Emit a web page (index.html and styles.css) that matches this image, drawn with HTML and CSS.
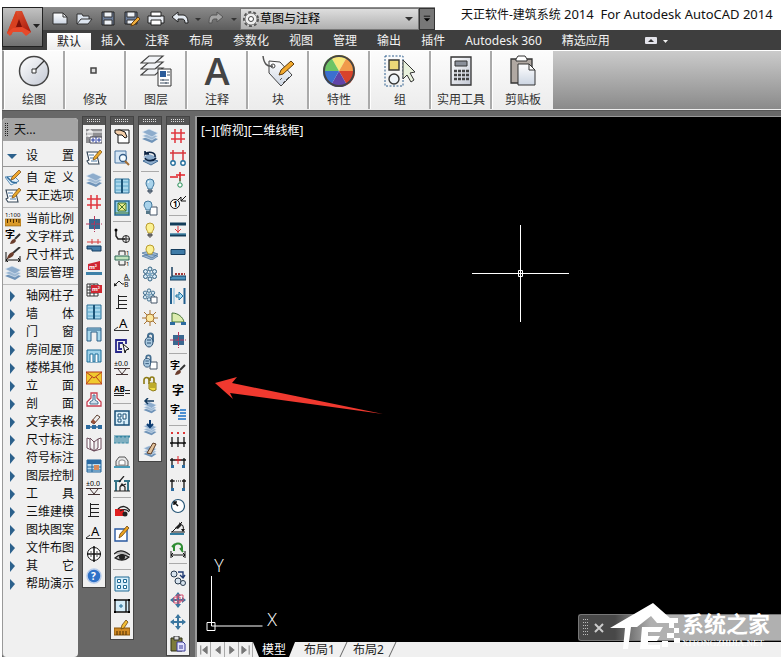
FILE: index.html
```html
<!DOCTYPE html>
<html lang="zh-CN">
<head>
    <meta charset="UTF-8">
    <meta name="viewport" content="width=device-width, initial-scale=1.0">
    <title>天正软件-建筑系统 2014</title>
    <link rel="stylesheet" href="styles.css">
</head>
<body>
    <svg class="gradients" aria-hidden="true">
        <defs>
            <linearGradient id="g-red" x1="0" y1="0" x2="1" y2="1"><stop offset="0" stop-color="#f0603a"/><stop offset="1" stop-color="#a01408"/></linearGradient>
            <linearGradient id="g-lens" x1="0" y1="0" x2="1" y2="1"><stop offset="0" stop-color="#fff"/><stop offset="1" stop-color="#c3c8d4"/></linearGradient>
            <linearGradient id="g-page" x1="0" y1="0" x2="0" y2="1"><stop offset="0" stop-color="#fff"/><stop offset="1" stop-color="#ccd5e2"/></linearGradient>
        </defs>
    </svg>

    <!-- Iconos -->
    <svg class="sprite" aria-hidden="true">
        <symbol id="layers" viewBox="0 0 16 16"><path d="M0 11l7-3 9 3-6 4z" fill="#6f93b8"/><path d="M0 8l7-3 9 3-6 4z" fill="#9db8d3" stroke="#e8f0f8" stroke-width=".6"/><path d="M0 4l7-3 9 4-6 4z" fill="#8daccc" stroke="#e8f0f8" stroke-width=".6"/></symbol>
        <symbol id="paper-pen" viewBox="0 0 16 16"><path d="M1 2h11v2l-1 1 2 9H3L1 11l2-1z" fill="#fff" stroke="#345" stroke-width="1.1"/><path d="M3 5h5M4 8h4M5 11h6" stroke="#4a7ba5" stroke-width="1.2"/><path d="M7 10l1-3 6-7 2 2-6 7z" fill="#e8a92c" stroke="#7a4a10" stroke-width=".7"/></symbol>
        <symbol id="pen-sheet" viewBox="0 0 16 16"><path d="M0 7l9-1 5 5-8 4z" fill="#e4f1fb" stroke="#5b8db5"/><path d="M2 7l5 5 5 1" fill="none" stroke="#2f6d9e" stroke-width="1.6"/><path d="M6 10l1-3 7-7 2 2-7 7z" fill="#efa62d" stroke="#70430e" stroke-width=".7"/></symbol>
        <symbol id="ruler" viewBox="0 0 16 16"><text x="0" y="6" class="t6">1:100</text><path d="M0 8h16v7H0z" fill="#d99a2b" stroke="#8c5a0c" stroke-width=".6"/><path d="M2.500 8v4M5.500 8v3M8.500 8v4M11.500 8v3M14 8v4" stroke="#4d2c00"/></symbol>
        <symbol id="zi-brush" viewBox="0 0 16 16"><text x="0" y="9" class="t10">字</text><path d="M15 5l-5 5" stroke="#333" stroke-width="2"/><path d="M5 15c1-4 3-5 5-5l1 2c-1 2-3 3-6 3z" fill="#6b3d2c"/></symbol>
        <symbol id="dim-brush" viewBox="0 0 16 16"><path d="M1 5v10M15 9v6M1 13h14M3 11l-2 2 2 2M13 11l2 2-2 2" fill="none" stroke="#111"/><path d="M15 0L8 6" stroke="#333" stroke-width="2"/><path d="M2 12c1-5 3-6 6-7l1 2c-1 3-4 4-7 5z" fill="#6b3d2c"/></symbol>
        <symbol id="hash" viewBox="0 0 16 16"><path d="M5 1v14M11 1v14M1 5h14M1 11h14" stroke="#e0343c" stroke-width="1.500"/></symbol>
        <symbol id="frame-add" viewBox="0 0 16 16"><path d="M0 1h16v14H0z" fill="#8f8f92"/><path d="M0 4h16M0 8h5M4 1v10M2 3h4v5H2z" stroke="#fff" fill="none"/><path d="M4 9h12v6H4z" fill="#fff" stroke="#445"/><path d="M10 9v6M5 12h4M7 10v4M11 12h4M13 10v4" stroke="#2b3fa0"/></symbol>
        <symbol id="column" viewBox="0 0 16 16"><path d="M3 3h11v10H3z" fill="#3a6890"/><path d="M8.500 0v16M0 8h16" stroke="#b4365c" stroke-dasharray="4 1"/></symbol>
        <symbol id="wall-cross" viewBox="0 0 16 16"><path d="M1 4h14M6 1v5M12 1v5" stroke="#d83b3b"/><path d="M1 8h14v5H6v-2H1z" fill="#467da9" stroke="#153e63"/></symbol>
        <symbol id="m2-bar" viewBox="0 0 16 16"><path d="M2 4l12-3v9H2z" fill="#cf2731"/><text x="3" y="9" class="t6 white">m²</text><path d="M0 12h16v3H0z" fill="#3e81a8"/></symbol>
        <symbol id="m2-table" viewBox="0 0 16 16"><path d="M1 2h11v12H1zM1 5h11M1 8h11M1 11h11M4 2v12M8 2v12" fill="#fff" stroke="#333"/><path d="M5 3h11v8H5z" fill="#cf2731"/><text x="6" y="9" class="t6 white">m²</text></symbol>
        <symbol id="window" viewBox="0 0 16 16"><path d="M1 1h14v14H1z" fill="#a9d8ed" stroke="#2a6f96"/><path d="M1 4h14M1 8h14M1 12h14" stroke="#5ba4c8"/><path d="M8 1v14" stroke="#1c5478" stroke-width="2"/></symbol>
        <symbol id="arch" viewBox="0 0 16 16"><path d="M1 15V2h14v13h-4V6H5v9z" fill="#a9d8ed" stroke="#2a5f86"/><path d="M1 4h14" stroke="#2a5f86"/></symbol>
        <symbol id="door-win" viewBox="0 0 16 16"><path d="M1 2h14v12H1z" fill="#9ed2ea" stroke="#1d6c98"/><path d="M4 14V6h3v8M9 14V6h3v8" fill="#fff" stroke="#1d6c98"/></symbol>
        <symbol id="envelope" viewBox="0 0 16 16"><path d="M0 2h16v12H0z" fill="#f0c92e" stroke="#b63a22"/><path d="M0 2l8 6 8-6M0 14l6-7M16 14l-6-7" stroke="#b63a22" fill="none"/></symbol>
        <symbol id="house-plan" viewBox="0 0 16 16"><path d="M5 6V1h6v5l4 4v4H1v-4z" fill="#fff" stroke="#c73e50" stroke-width="1.300"/><path d="M7 3v5l-3 2v2h8v-2L9 8V3z" fill="#cfe0ed" stroke="#456f91"/></symbol>
        <symbol id="eraser" viewBox="0 0 16 16"><path d="M2 13h12" stroke="#2c6b9f" stroke-width="1.500"/><path d="M0 11h4v4H0zM6 11h4v4H6zM12 11h4v4h-4z" fill="#2c6b9f"/><path d="M5 8l6-7 3 2-6 7z" fill="#eee" stroke="#5e4030"/><path d="M5 8l2-3 3 3-2 2z" fill="#9a513a"/></symbol>
        <symbol id="book" viewBox="0 0 16 16"><path d="M1 2l3 1v9l4 3 4-3V3l3-1v11l-7 2-7-3zM8 15V6L4 2M8 6l4-3" fill="#fff" stroke="#6b4b5a"/></symbol>
        <symbol id="table-hand" viewBox="0 0 16 16"><path d="M1 2h14v12H1z" fill="#b9dcf2" stroke="#23659a"/><path d="M1 2h14v4H1z" fill="#2a6ca5"/><path d="M1 9h14M1 12h14M6 6v8" stroke="#23659a"/><path d="M8 7h5v5H8z" fill="#d78a5c"/></symbol>
        <symbol id="elev" viewBox="0 0 16 16"><text x="0" y="6" class="t7">±0.0</text><path d="M0 8.500h16M4 9l4 5 4-5M2 14.500h12" stroke="#433" fill="none"/></symbol>
        <symbol id="comb" viewBox="0 0 16 16"><path d="M4.500 1v14M4 2.500h9M4 6.500h9M4 10.500h9M2 14.500h11" stroke="#222"/></symbol>
        <symbol id="a-arrow" viewBox="0 0 16 16"><text x="5" y="12" class="t13">A</text><path d="M0 14.500h15M4 11l-4 3" stroke="#333" fill="none"/></symbol>
        <symbol id="compass" viewBox="0 0 16 16"><circle cx="8" cy="8" r="6.500" fill="#fff" stroke="#111"/><path d="M8 0v16M1 8h14" stroke="#111" stroke-width="1.500"/><path d="M5 5v6M11 5v6" stroke="#555"/></symbol>
        <symbol id="help" viewBox="0 0 16 16"><circle cx="8" cy="8" r="7" fill="#2f72c8" stroke="#b6cbea" stroke-width="1.500"/><text x="5" y="12" class="t10 white">?</text></symbol>
        <symbol id="hand-page" viewBox="0 0 16 16"><path d="M4 2h11v13H4z" fill="#fff" stroke="#111"/><path d="M1 2h5l5 2 2 5-2 1-3-3H4L1 5z" fill="#f2cda8" stroke="#111"/></symbol>
        <symbol id="page-zoom" viewBox="0 0 16 16"><path d="M1 1h11v12H1z" fill="#d6e6f4" stroke="#4a76a3"/><circle cx="9" cy="8" r="3.500" fill="#f4fbff" stroke="#335c86" stroke-width="1.300"/><path d="M11 11l4 4" stroke="#a06b32" stroke-width="2"/></symbol>
        <symbol id="win-x" viewBox="0 0 16 16"><path d="M1 1h14v14H1z" fill="#8dcbe5" stroke="#26678e" stroke-width="1.500"/><path d="M4 3h8v8H4z" fill="#e7ea8c" stroke="#47762c"/><path d="M4 3l8 8M12 3l-8 8M1 13h14" stroke="#47762c"/></symbol>
        <symbol id="pipe" viewBox="0 0 16 16"><path d="M2 1v7l2 3h7" stroke="#222" fill="none" stroke-width="1.500"/><circle cx="2" cy="2" r="1.500"/><circle cx="12" cy="11" r="3.500" fill="none" stroke="#222"/><path d="M12 8v7M9 11h7" stroke="#222"/></symbol>
        <symbol id="section" viewBox="0 0 16 16"><path d="M5 5V1h6M5 11v4h6M11 1v4M11 11v4" stroke="#222" fill="none"/><path d="M1 6h14v4H1z" fill="#bfe3bd" stroke="#2c6957"/><text x="12" y="5" class="t6">1</text><text x="12" y="16" class="t6">1</text></symbol>
        <symbol id="ab-lead" viewBox="0 0 16 16"><path d="M0 14l5-5 3 3h2M0 14l1-3M0 14l3-1M10 8h6" stroke="#222" fill="none"/><text x="10" y="7" class="t7">A</text><text x="10" y="15" class="t7">B</text></symbol>
        <symbol id="door-cursor" viewBox="0 0 16 16"><path d="M12 6V2H2v12h6M9 5H5v6h3" fill="none" stroke="#28288b" stroke-width="1.800"/><path d="M9 6l6 5-3 1-1 3z" fill="#fff" stroke="#111"/></symbol>
        <symbol id="ab-num" viewBox="0 0 16 16"><text x="0" y="10" class="t8">AB</text><path d="M0 11.500h10M0 13.500h10M11 8.500h5M11 11.500h5" stroke="#222"/></symbol>
        <symbol id="panel" viewBox="0 0 16 16"><path d="M1 1h14v14H1z" fill="#d7edf8" stroke="#174e76" stroke-width="1.500"/><path d="M4 4h3v3H4zM9 4h3v5H9zM4 9h3v3H4zM10 11v4" fill="#fff" stroke="#174e76"/></symbol>
        <symbol id="coil" viewBox="0 0 16 16"><path d="M0 4h16M0 5v6h2V5h2v6h2V5h2v6h2V5h2v6h2V5h2" fill="none" stroke="#3485a2" stroke-width="1.200"/></symbol>
        <symbol id="dome" viewBox="0 0 16 16"><path d="M2 12V7l3-4h6l3 4v5z" fill="#e8e8e8" stroke="#555"/><path d="M5 11V7l2-1h2l2 1v4z" fill="#fff" stroke="#888"/><path d="M0 12h16v2H0z" fill="#4a9bb7"/></symbol>
        <symbol id="roof-person" viewBox="0 0 16 16"><path d="M0 5h7M10 5h6M2 5v10M14 5v10" stroke="#347387" stroke-width="2"/><path d="M5 6l5-6M6 15v-4l2-3 3 3v4zM7 10l5-2M0 15h16" fill="none" stroke="#222" stroke-width="1.200"/></symbol>
        <symbol id="red-eye" viewBox="0 0 16 16"><path d="M1 5h9v7H1z" fill="#e02020"/><path d="M4 5c4-4 9-3 12 2M6 7c3-2 7-2 9 1" fill="none" stroke="#222" stroke-width="1.300"/><circle cx="11" cy="10" r="2.500" fill="#222"/></symbol>
        <symbol id="note-pen" viewBox="0 0 16 16"><path d="M1 3h12v12H1z" fill="#fff" stroke="#2858a0" stroke-width="1.400"/><path d="M5 12l1-4 7-8 2 2-7 8z" fill="#eca21e" stroke="#6b4411" stroke-width=".8"/></symbol>
        <symbol id="eye" viewBox="0 0 16 16"><path d="M0 6c5-5 10-4 16 1M1 10c4-4 9-4 14-1-4 4-9 4-14 1z" fill="#bbb" stroke="#222" stroke-width="1.200"/><circle cx="8" cy="9" r="3" fill="#222"/></symbol>
        <symbol id="grid4" viewBox="0 0 16 16"><path d="M1 1h14v14H1z" fill="#d5eefb" stroke="#206a94"/><path d="M3.500 3.500h3v3h-3zM9.500 3.500h3v3h-3zM3.500 9.500h3v3h-3zM9.500 9.500h3v3h-3z" fill="#fff" stroke="#206a94"/></symbol>
        <symbol id="sheet-dot" viewBox="0 0 16 16"><path d="M1 2h14v12H1zM12 2v12" fill="#d5eefb" stroke="#111" stroke-width="1.300"/><path d="M7 6v4M5 8h4" stroke="#206a94"/><path d="M0 1h2v2H0zM0 13h2v2H0zM14 1h2v2h-2zM14 13h2v2h-2z"/></symbol>
        <symbol id="ruler-pen" viewBox="0 0 16 16"><path d="M0 8h16v7H0z" fill="#d18b25" stroke="#86540c"/><path d="M3 11v4M6 11v4M9 11v4M12 11v4" stroke="#4d2c00"/><path d="M7 9l1-4 4-5 2 2-4 6z" fill="#f2bd35" stroke="#6b4411" stroke-width=".8"/></symbol>
        <symbol id="layer-back" viewBox="0 0 16 16"><path d="M1 11l6-3 9 3-7 4z" fill="#8daccc" stroke="#436d96"/><path d="M1 7l6-3 8 3-6 3z" fill="#8daccc"/><path d="M13 7c1-5-7-6-10-3V1M3 4h4M3 8c2 4 9 3 11 0" stroke="#0a2140" stroke-width="1.600" fill="none"/></symbol>
        <symbol id="bulb" viewBox="0 0 16 16"><path d="M6 11c0-2-2-3-2-6a4 4 0 018 0c0 3-2 4-2 6z" fill="#a8d2ea" stroke="#3f769b"/><path d="M6 12h4v2H6zM7 15h2" fill="#789" stroke="#456"/><path d="M6 5l1-2" stroke="#fff"/></symbol>
        <symbol id="bulb-page" viewBox="0 0 16 16"><path d="M8 7h7v8H8z" fill="#fff" stroke="#456"/><path d="M4 10c0-2-2-3-2-5a4 4 0 018 0c0 2-2 3-2 5z" fill="#a8d2ea" stroke="#3f769b"/><path d="M4 11h4v3H4z" fill="#578"/></symbol>
        <symbol id="bulb-on" viewBox="0 0 16 16"><path d="M6 11c0-2-2-3-2-6a4 4 0 018 0c0 3-2 4-2 6z" fill="#fbf191" stroke="#b99b2d"/><path d="M6 12h4v2H6zM7 15h2" fill="#777" stroke="#555"/></symbol>
        <symbol id="bulb-layers" viewBox="0 0 16 16"><path d="M0 9l7-2 9 3-6 4zM0 12l7-2 9 2-6 4z" fill="#9db8d3" stroke="#456f98" stroke-width=".7"/><path d="M6 10c0-2-2-2-2-5a4 4 0 018 0c0 3-2 3-2 5z" fill="#fbf191" stroke="#b99b2d"/></symbol>
        <symbol id="snow" viewBox="0 0 16 16"><g fill="#d6e9f5" stroke="#2f5f80"><circle cx="8" cy="3" r="2"/><circle cx="8" cy="13" r="2"/><circle cx="3.500" cy="5.500" r="2"/><circle cx="12.500" cy="5.500" r="2"/><circle cx="3.500" cy="10.500" r="2"/><circle cx="12.500" cy="10.500" r="2"/></g><path d="M8 5v6M5 7l6 3M11 7l-6 3" stroke="#7ba6c2" stroke-width="1.500"/></symbol>
        <symbol id="snow-page" viewBox="0 0 16 16"><use href="#snow" width="14" height="14"/><path d="M9 9h6v6H9z" fill="#fff" stroke="#456"/></symbol>
        <symbol id="sun" viewBox="0 0 16 16"><path d="M8 0v16M0 8h16M2 2l12 12M14 2L2 14" stroke="#a87432"/><circle cx="8" cy="8" r="4" fill="#fbe69c" stroke="#a87432"/></symbol>
        <symbol id="lock" viewBox="0 0 16 16"><path d="M6 7V4a2.500 2.500 0 015 0v5l-2 2" fill="none" stroke="#456f91" stroke-width="2"/><ellipse cx="7" cy="10" rx="4" ry="5" fill="#aac9df" stroke="#294f73"/><path d="M5 8h4M5 11h4" stroke="#294f73"/></symbol>
        <symbol id="lock-page" viewBox="0 0 16 16"><path d="M8 8h7v7H8z" fill="#fff" stroke="#456"/><use href="#lock" x="-1" y="0" width="14" height="14"/></symbol>
        <symbol id="unlock" viewBox="0 0 16 16"><path d="M2 8V4a2.500 2.500 0 015 0v4M8 5V3a2 2 0 014 0v4" fill="none" stroke="#8d7a13" stroke-width="1.600"/><path d="M7 7h7v7l-3 1-4-2z" fill="#efdc45" stroke="#8d7a13"/><path d="M8 9h5M8 11h5" stroke="#8d7a13"/></symbol>
        <symbol id="layer-left" viewBox="0 0 16 16"><use href="#layers" y="3" width="16" height="13"/><path d="M12 3H3M6 0L3 3l3 3" stroke="#12395d" fill="none" stroke-width="1.500"/></symbol>
        <symbol id="layer-down" viewBox="0 0 16 16"><use href="#layers" y="3" width="16" height="13"/><path d="M8 0v7M5 4l3 3 3-3" stroke="#0c3b70" fill="none" stroke-width="2"/></symbol>
        <symbol id="layer-brush" viewBox="0 0 16 16"><use href="#layers" y="3" width="16" height="13"/><path d="M5 11l6-10 3 1-5 10z" fill="#e2c19a" stroke="#5a3a24"/></symbol>
        <symbol id="axis-two" viewBox="0 0 16 16"><path d="M0 3h16M3 0v10M13 0v10" stroke="#d6333a" stroke-width="1.500"/><circle cx="3" cy="13" r="2.200" fill="#fff" stroke="#216d9b" stroke-width="1.400"/><circle cx="13" cy="13" r="2.200" fill="#fff" stroke="#216d9b" stroke-width="1.400"/></symbol>
        <symbol id="axis-one" viewBox="0 0 16 16"><path d="M0 5h8M10 0v9M6 3h9" stroke="#e02027" stroke-width="1.600"/><path d="M10 6v4" stroke="#1d8b50"/><circle cx="10" cy="13" r="2.200" fill="#fff" stroke="#1d8b50"/></symbol>
        <symbol id="axis-num" viewBox="0 0 16 16"><circle cx="5" cy="10" r="4.500" fill="#fff" stroke="#111"/><text x="3" y="13" class="t8">1</text><path d="M8 6l3-3v4l5-5M11 7h5" stroke="#111" fill="none"/></symbol>
        <symbol id="wall-mid" viewBox="0 0 16 16"><path d="M0 2h16M0 13h16" stroke="#123c59" stroke-width="3"/><path d="M0 12h16" stroke="#56a5c9"/><path d="M8 4v7M5 7l3 3 3-3" stroke="#d6333a" fill="none"/></symbol>
        <symbol id="wall" viewBox="0 0 16 16"><path d="M1 5.500h14v5H1z" fill="#3f7ba7" stroke="#153c5c"/></symbol>
        <symbol id="wall-l" viewBox="0 0 16 16"><path d="M2 1v9h14v4H0v-3h2z" fill="#4a91bc" stroke="#153c5c"/><path d="M5 8h10" stroke="#a33838" stroke-width="2" stroke-dasharray="2 1"/></symbol>
        <symbol id="wall-shift" viewBox="0 0 16 16"><path d="M1 0v16M14.500 0v16" stroke="#225f8d" stroke-width="2"/><path d="M4 0v16" stroke="#76b4d8"/><path d="M6 7h3V4l4 4-4 4V9H6z" fill="#a8dbf3" stroke="#1c719e"/></symbol>
        <symbol id="slope" viewBox="0 0 16 16"><path d="M2 3c6 0 11 4 12 9H2z" fill="#dcecae" stroke="#447234"/><path d="M0 12h5v3H0zM11 12h5v3h-5z" fill="#2c6b9f"/></symbol>
        <symbol id="zi" viewBox="0 0 16 16"><text x="2" y="13" class="t12">字</text></symbol>
        <symbol id="zi-page" viewBox="0 0 16 16"><text x="0" y="9" class="t10">字</text><path d="M10 6h6M10 9h6M8 12h8M8 15h8" stroke="#4d8fd0" stroke-width="2"/></symbol>
        <symbol id="dim3" viewBox="0 0 16 16"><path d="M2 5v10M8 5v10M14 5v10M0 11h16M1 12l2-2M7 12l2-2M13 12l2-2" stroke="#111" stroke-width="1.300"/><path d="M1 1h2M7 1h2M13 1h2" stroke="#d33" stroke-width="2"/></symbol>
        <symbol id="dim-red" viewBox="0 0 16 16"><path d="M2 4v9M14 4v9M0 6h16" stroke="#111" stroke-width="1.300"/><path d="M5 6h6M8 2v8" stroke="#e02027"/><path d="M1 11h3v3H1zM12 11h3v3h-3z" fill="#2c6b9f"/></symbol>
        <symbol id="dim-gap" viewBox="0 0 16 16"><path d="M2 3v10M14 3v10M0 5h4M12 5h4" stroke="#111" stroke-width="1.300"/><path d="M4 5h8" stroke="#111" stroke-dasharray="1 1"/><path d="M1 12h3v3H1zM12 12h3v3h-3z" fill="#2c6b9f"/></symbol>
        <symbol id="radius" viewBox="0 0 16 16"><circle cx="8" cy="8" r="6.500" fill="#fff" stroke="#245475" stroke-width="1.200"/><path d="M8 8L4 4M4 7V4h3" stroke="#111" fill="none" stroke-width="1.500"/></symbol>
        <symbol id="angle" viewBox="0 0 16 16"><path d="M1 12h14M2 12L12 2M9 3c4 1 5 4 4 8" stroke="#111" fill="none"/><path d="M5 8l5-5 2 2-4 4z" fill="#222"/><path d="M11 9h4l-2 3z" fill="#111"/><path d="M0 14h14" stroke="#347c9e" stroke-width="2"/></symbol>
        <symbol id="dim-turn" viewBox="0 0 16 16"><path d="M4 9V5a4 3.500 0 018 0v3M2 5l3-3M10 6l3 4" fill="none" stroke="#2e8c32" stroke-width="2"/><path d="M1 9v7M15 9v7M1 13h14M3 11l-2 2 2 2M13 11l2 2-2 2" fill="none" stroke="#111"/></symbol>
        <symbol id="copy-round" viewBox="0 0 16 16"><g fill="#d7e3ee" stroke="#28394c"><circle cx="4" cy="4" r="3"/><circle cx="8" cy="11" r="3"/><circle cx="13" cy="13" r="2.500"/></g><path d="M8 2h5v5M10 5l3 3 2-3" fill="none" stroke="#203b74" stroke-width="1.400"/></symbol>
        <symbol id="move" viewBox="0 0 16 16"><path d="M8 1v14M1 8h14" stroke="#3b769f" stroke-width="2"/><path d="M8 0l3 4H5zM8 16l3-4H5zM0 8l4-3v6zM16 8l-4-3v6z" fill="#3b769f"/></symbol>
        <symbol id="move-red" viewBox="0 0 16 16"><use href="#move" width="16" height="16"/><path d="M4 5h6v6H4zM7 3h6v6H7z" fill="none" stroke="#d94a6c"/></symbol>
        <symbol id="clip" viewBox="0 0 16 16"><path d="M1 2h11v13H1z" fill="#7c7b3a" stroke="#2f3018"/><path d="M4 0h5v4H4z" fill="#ddd" stroke="#333"/><path d="M7 6h6l2 2v7H7z" fill="#e3e3ff" stroke="#3b3b98"/><path d="M9 10h4M9 12h4" stroke="#3b3b98"/></symbol>
        <symbol id="tri" viewBox="0 0 16 16"><path d="M5 3l5 5-5 6z" fill="#2c618c"/></symbol>
    </svg>

    <header class="top">
        <div class="app-cell">
            <button class="app-button" aria-label="应用程序菜单">
                <svg width="38" height="36" viewBox="0 0 38 36"><path d="M13 2h6l9 21-5 3-2-5H10l-2 5-4-2z" fill="url(#g-red)"/><path d="M13 2l3 12-6 7-2 5-4-2z" fill="#d8401f"/><path d="M16 10l3 8h-6z" fill="#7c1109"/><path d="M4 24l6-5 9-1 9 5-5 4-4-4h-9l-3 4z" fill="#e8492a"/><path d="M30 15h7l-3.500 4z" fill="#222"/></svg>
            </button>
        </div>
        <div class="quick">
            <button aria-label="新建"><svg viewBox="0 0 18 18"><path d="M2 3h10l4 4v7H2z" fill="url(#g-page)" stroke="#333"/><path d="M12 3v4h4" fill="none" stroke="#333"/></svg></button>
            <button aria-label="打开"><svg viewBox="0 0 18 18"><path d="M2 14V4h5l1 2h6v3M2 14l4-5h11l-4 5z" fill="#dde5ef" stroke="#333"/></svg></button>
            <button aria-label="保存"><svg viewBox="0 0 18 18"><path d="M3 2h12v13H3z" fill="#6c7d98" stroke="#222"/><path d="M5 2h8v5H5zM5 10h8v5H5z" fill="#eef2f7" stroke="#333"/></svg></button>
            <button aria-label="另存为"><svg viewBox="0 0 18 18"><path d="M2 2h12v12H2z" fill="#6c7d98" stroke="#222"/><path d="M4 2h8v5H4zM4 10h8v4H4z" fill="#eef2f7" stroke="#333"/><path d="M8 16l1-3 6-6 2 2-6 6z" fill="#f0ae3c" stroke="#6a4210"/></svg></button>
            <button aria-label="打印"><svg viewBox="0 0 18 18"><path d="M1 6h16v7H1z" fill="#e9edf3" stroke="#222"/><path d="M4 2h10v4H4zM4 10h10v5H4z" fill="#fff" stroke="#222"/></svg></button>
            <button aria-label="放弃"><svg viewBox="0 0 18 18"><path d="M1 7l6-5v3h5c3 0 5 3 5 8h-3c0-3-1-4-3-4H7v3z" fill="#e4eaf1" stroke="#222"/></svg></button>
            <button class="mini" aria-label="放弃列表"><svg viewBox="0 0 8 8"><path d="M1 3h6L4 6z" fill="#333"/></svg></button>
            <button aria-label="重做"><svg viewBox="0 0 18 18"><path d="M16 7l-6-5v3H6c-3 0-4 3-4 8h3c0-3 1-4 2-4h3v3z" fill="#a5a5a5" stroke="#555"/></svg></button>
            <button class="mini" aria-label="重做列表"><svg viewBox="0 0 8 8"><path d="M1 3h6L4 6z" fill="#333"/></svg></button>
            <label class="space">
                <svg width="18" height="18" viewBox="0 0 18 18"><circle cx="9" cy="9" r="7" fill="#eee" stroke="#555" stroke-width="2" stroke-dasharray="3 2"/><circle cx="9" cy="9" r="6" fill="#eee" stroke="#777"/><circle cx="9" cy="9" r="2.500" fill="#fff" stroke="#444"/></svg>
                <select aria-label="工作空间"><option>草图与注释</option></select>
                <svg class="caret" width="8" height="8" viewBox="0 0 8 8"><path d="M0 2h8L4 6z" fill="#333"/></svg>
            </label>
            <button class="more" aria-label="自定义快速访问工具栏"><svg viewBox="0 0 10 10"><path d="M1 1.500h8" stroke="#000"/><path d="M1 4h8L5 8z"/></svg></button>
        </div>
        <h1 class="title">天正软件-建筑系统 <span>2014&nbsp; For Autodesk AutoCAD 2014</span></h1>
        <nav class="menu">
            <button class="active">默认</button>
            <button>插入</button>
            <button>注释</button>
            <button>布局</button>
            <button>参数化</button>
            <button>视图</button>
            <button>管理</button>
            <button>输出</button>
            <button>插件</button>
            <button>Autodesk 360</button>
            <button>精选应用</button>
            <button class="fold" aria-label="最小化面板"><svg width="26" height="10" viewBox="0 0 26 10"><rect x="1" y="1" width="12" height="7" rx="1" fill="#e3e3ea"/><path d="M4 6h6L7 3z" fill="#333"/><path d="M19 4h5l-2.500 3z" fill="#eee"/></svg></button>
        </nav>
    </header>

    <section class="ribbon">
        <button class="panel">
            <svg viewBox="0 0 32 32"><circle cx="16" cy="16" r="14.500" fill="url(#g-lens)" stroke="#444" stroke-width="1.500"/><path d="M17 15l9-9" stroke="#333" stroke-width="1.300"/><path d="M14 14h4v4h-4z" fill="#fff" stroke="#333"/></svg>
            <span>绘图</span>
        </button>
        <button class="panel">
            <svg viewBox="0 0 32 32"><path d="M12 13h5v5h-5z" fill="#ddd" stroke="#444" stroke-width="1.500"/></svg>
            <span>修改</span>
        </button>
        <button class="panel">
            <svg viewBox="0 0 32 32"><g fill="#f2f4f7" stroke="#444" stroke-width="1.200"><path d="M1 20l8-7h14l-8 7z"/><path d="M1 14l8-7h14l-8 7z"/><path d="M1 8l8-7h14l-8 7z"/></g><path d="M18 14h13v17H18z" fill="#fff" stroke="#333"/><path d="M20 16h6v6h-6z" fill="#2b5c9a"/><path d="M27 17h3M27 20h3M20 25h9M20 28h9M23 24v2M26 27v2" stroke="#456"/></svg>
            <span>图层</span>
        </button>
        <button class="panel">
            <svg viewBox="0 0 32 32"><text x="16" y="30" text-anchor="middle" class="big-a">A</text></svg>
            <span>注释</span>
        </button>
        <button class="panel">
            <svg viewBox="0 0 32 32"><path d="M7 6l11 1 12 13-11 11L7 18z" fill="url(#g-page)" stroke="#444"/><circle cx="11" cy="11" r="2" fill="#fff" stroke="#444"/><path d="M1 1c1 8 4 11 10 10" fill="none" stroke="#555" stroke-width="1.500"/><path d="M18 25l2-2m1 5l2-2m1-1l3-3" stroke="#555"/><path d="M17 20l2-5L29 6l3 3-11 10z" fill="#f2a92d" stroke="#5e3b0c"/></svg>
            <span>块</span>
        </button>
        <button class="panel">
            <svg viewBox="0 0 32 32"><path d="M16 16L8 2a16 16 0 0116 0z" fill="#f7e77b"/><path d="M16 16l8-14a16 16 0 018 14z" fill="#f09a4a"/><path d="M16 16h16a16 16 0 01-8 14z" fill="#d8432b"/><path d="M16 16l8 14a16 16 0 01-16 0z" fill="#6043a8"/><path d="M16 16L8 30A16 16 0 010 16z" fill="#3b6fd0"/><path d="M16 16H0A16 16 0 018 2z" fill="#6cc465"/><circle cx="16" cy="16" r="15" fill="none" stroke="#444" stroke-width="2"/></svg>
            <span>特性</span>
        </button>
        <button class="panel">
            <svg viewBox="0 0 32 32"><path d="M1 1h18v30H1z" fill="none" stroke="#2d5c8c" stroke-dasharray="2 1.500"/><path d="M5 5h10v10H5z" fill="#ecd878" stroke="#333" stroke-width="1.400"/><circle cx="10" cy="24" r="5" fill="#eef3f8" stroke="#333" stroke-width="1.400"/><path d="M19 5l12 12-5 1 4 7-3 2-4-7-4 4z" fill="#e8f1dc" stroke="#333"/></svg>
            <span>组</span>
        </button>
        <button class="panel">
            <svg viewBox="0 0 32 32"><path d="M6 2h20v28H6z" fill="url(#g-lens)" stroke="#333" stroke-width="1.300"/><path d="M10 6h12v5H10z" fill="#8a8f99" stroke="#333"/><path d="M9 16h3m1 0h3m1 0h3m1 0h3M9 20h3m1 0h3m1 0h3m1 0h3M9 24h3m1 0h3m1 0h3m1 0h3" stroke="#444" stroke-width="2.500"/></svg>
            <span>实用工具</span>
        </button>
        <button class="panel">
            <svg viewBox="0 0 32 32"><path d="M4 4h21v24H4z" fill="#b0a8a2" stroke="#333" stroke-width="1.300"/><path d="M9 4l2-3h7l2 3v2H9z" fill="#fff" stroke="#333"/><path d="M11 9h11l6 6v15H11z" fill="url(#g-page)" stroke="#333"/><path d="M22 9v6h6z" fill="#fff" stroke="#333"/></svg>
            <span>剪贴板</span>
        </button>
    </section>

    <main class="work">
        <aside class="side">
            <h2 class="side-title"><i class="grip-v"></i>天...</h2>
            <button class="side-head"><svg viewBox="0 0 16 16"><path d="M2 6h10l-5 5z" fill="#2c618c"/></svg><span>设置</span></button>
            <ul>
                <li><button><svg><use href="#pen-sheet"/></svg><span>自定义</span></button></li>
                <li><button><svg><use href="#paper-pen"/></svg><span>天正选项</span></button></li>
            </ul>
            <ul>
                <li><button><svg><use href="#ruler"/></svg><span>当前比例</span></button></li>
                <li><button><svg><use href="#zi-brush"/></svg><span>文字样式</span></button></li>
                <li><button><svg><use href="#dim-brush"/></svg><span>尺寸样式</span></button></li>
                <li><button><svg><use href="#layers"/></svg><span>图层管理</span></button></li>
            </ul>
            <ul>
                <li><button><svg><use href="#tri"/></svg><span>轴网柱子</span></button></li>
                <li><button><svg><use href="#tri"/></svg><span>墙体</span></button></li>
                <li><button><svg><use href="#tri"/></svg><span>门窗</span></button></li>
                <li><button><svg><use href="#tri"/></svg><span>房间屋顶</span></button></li>
                <li><button><svg><use href="#tri"/></svg><span>楼梯其他</span></button></li>
                <li><button><svg><use href="#tri"/></svg><span>立面</span></button></li>
                <li><button><svg><use href="#tri"/></svg><span>剖面</span></button></li>
                <li><button><svg><use href="#tri"/></svg><span>文字表格</span></button></li>
                <li><button><svg><use href="#tri"/></svg><span>尺寸标注</span></button></li>
                <li><button><svg><use href="#tri"/></svg><span>符号标注</span></button></li>
                <li><button><svg><use href="#tri"/></svg><span>图层控制</span></button></li>
                <li><button><svg><use href="#tri"/></svg><span>工具</span></button></li>
                <li><button><svg><use href="#tri"/></svg><span>三维建模</span></button></li>
                <li><button><svg><use href="#tri"/></svg><span>图块图案</span></button></li>
                <li><button><svg><use href="#tri"/></svg><span>文件布图</span></button></li>
                <li><button><svg><use href="#tri"/></svg><span>其它</span></button></li>
                <li><button><svg><use href="#tri"/></svg><span>帮助演示</span></button></li>
            </ul>
        </aside>

        <div class="toolbars">
            <div class="toolbar">
                <i class="grip"></i>
                <button aria-label="图框"><svg><use href="#frame-add"/></svg></button>
                <button aria-label="选项"><svg><use href="#paper-pen"/></svg></button>
                <button aria-label="图层"><svg><use href="#layers"/></svg></button>
                <button aria-label="轴网"><svg><use href="#hash"/></svg></button>
                <button aria-label="柱子"><svg><use href="#column"/></svg></button>
                <button aria-label="墙体"><svg><use href="#wall-cross"/></svg></button>
                <button aria-label="面积"><svg><use href="#m2-bar"/></svg></button>
                <button aria-label="面积表"><svg><use href="#m2-table"/></svg></button>
                <button aria-label="窗"><svg><use href="#window"/></svg></button>
                <button aria-label="门洞"><svg><use href="#arch"/></svg></button>
                <button aria-label="门窗"><svg><use href="#door-win"/></svg></button>
                <button aria-label="屋顶"><svg><use href="#envelope"/></svg></button>
                <button aria-label="轮廓"><svg><use href="#house-plan"/></svg></button>
                <button aria-label="擦除"><svg><use href="#eraser"/></svg></button>
                <button aria-label="图集"><svg><use href="#book"/></svg></button>
                <button aria-label="表格"><svg><use href="#table-hand"/></svg></button>
                <button aria-label="标高"><svg><use href="#elev"/></svg></button>
                <button aria-label="做法"><svg><use href="#comb"/></svg></button>
                <button aria-label="引出"><svg><use href="#a-arrow"/></svg></button>
                <button aria-label="指北针"><svg><use href="#compass"/></svg></button>
                <button aria-label="帮助"><svg><use href="#help"/></svg></button>
            </div>
            <div class="toolbar">
                <i class="grip"></i>
                <button aria-label="编辑"><svg><use href="#hand-page"/></svg></button>
                <button aria-label="查询"><svg><use href="#page-zoom"/></svg></button>
                <hr>
                <button aria-label="窗"><svg><use href="#window"/></svg></button>
                <button aria-label="窗编辑"><svg><use href="#win-x"/></svg></button>
                <hr>
                <button aria-label="索引"><svg><use href="#pipe"/></svg></button>
                <button aria-label="剖切"><svg><use href="#section"/></svg></button>
                <button aria-label="引线"><svg><use href="#ab-lead"/></svg></button>
                <button aria-label="做法标注"><svg><use href="#comb"/></svg></button>
                <button aria-label="箭头"><svg><use href="#a-arrow"/></svg></button>
                <button aria-label="对象选择"><svg><use href="#door-cursor"/></svg></button>
                <button aria-label="标高标注"><svg><use href="#elev"/></svg></button>
                <button aria-label="图名"><svg><use href="#ab-num"/></svg></button>
                <hr>
                <button aria-label="平面"><svg><use href="#panel"/></svg></button>
                <button aria-label="线图案"><svg><use href="#coil"/></svg></button>
                <button aria-label="图块"><svg><use href="#dome"/></svg></button>
                <button aria-label="立面"><svg><use href="#roof-person"/></svg></button>
                <hr>
                <button aria-label="局部隐藏"><svg><use href="#red-eye"/></svg></button>
                <button aria-label="局部可见"><svg><use href="#note-pen"/></svg></button>
                <button aria-label="恢复可见"><svg><use href="#eye"/></svg></button>
                <hr>
                <button aria-label="视口"><svg><use href="#grid4"/></svg></button>
                <button aria-label="插入图框"><svg><use href="#sheet-dot"/></svg></button>
                <button aria-label="改变比例"><svg><use href="#ruler-pen"/></svg></button>
            </div>
            <div class="toolbar">
                <i class="grip"></i>
                <button aria-label="图层"><svg><use href="#layers"/></svg></button>
                <button aria-label="图层恢复"><svg><use href="#layer-back"/></svg></button>
                <hr>
                <button aria-label="关闭图层"><svg><use href="#bulb"/></svg></button>
                <button aria-label="关闭其它"><svg><use href="#bulb-page"/></svg></button>
                <button aria-label="打开图层"><svg><use href="#bulb-on"/></svg></button>
                <button aria-label="图层全开"><svg><use href="#bulb-layers"/></svg></button>
                <button aria-label="冻结图层"><svg><use href="#snow"/></svg></button>
                <button aria-label="冻结其它"><svg><use href="#snow-page"/></svg></button>
                <button aria-label="解冻图层"><svg><use href="#sun"/></svg></button>
                <button aria-label="锁定图层"><svg><use href="#lock"/></svg></button>
                <button aria-label="锁定其它"><svg><use href="#lock-page"/></svg></button>
                <button aria-label="解锁图层"><svg><use href="#unlock"/></svg></button>
                <button aria-label="图层返回"><svg><use href="#layer-left"/></svg></button>
                <button aria-label="合并图层"><svg><use href="#layer-down"/></svg></button>
                <button aria-label="图元改层"><svg><use href="#layer-brush"/></svg></button>
            </div>
            <div class="toolbar">
                <i class="grip"></i>
                <button aria-label="绘制轴网"><svg><use href="#hash"/></svg></button>
                <button aria-label="两点轴标"><svg><use href="#axis-two"/></svg></button>
                <button aria-label="单轴标注"><svg><use href="#axis-one"/></svg></button>
                <button aria-label="轴号"><svg><use href="#axis-num"/></svg></button>
                <hr>
                <button aria-label="墙体分段"><svg><use href="#wall-mid"/></svg></button>
                <button aria-label="绘制墙体"><svg><use href="#wall"/></svg></button>
                <button aria-label="墙角"><svg><use href="#wall-l"/></svg></button>
                <button aria-label="偏移"><svg><use href="#wall-shift"/></svg></button>
                <button aria-label="门"><svg><use href="#slope"/></svg></button>
                <button aria-label="标准柱"><svg><use href="#column"/></svg></button>
                <hr>
                <button aria-label="文字样式"><svg><use href="#zi-brush"/></svg></button>
                <button aria-label="单行文字"><svg><use href="#zi"/></svg></button>
                <button aria-label="多行文字"><svg><use href="#zi-page"/></svg></button>
                <hr>
                <button aria-label="逐点标注"><svg><use href="#dim3"/></svg></button>
                <button aria-label="裁剪标注"><svg><use href="#dim-red"/></svg></button>
                <button aria-label="连接尺寸"><svg><use href="#dim-gap"/></svg></button>
                <button aria-label="半径标注"><svg><use href="#radius"/></svg></button>
                <button aria-label="角度标注"><svg><use href="#angle"/></svg></button>
                <button aria-label="尺寸自调"><svg><use href="#dim-turn"/></svg></button>
                <hr>
                <button aria-label="自由复制"><svg><use href="#copy-round"/></svg></button>
                <button aria-label="自由移动"><svg><use href="#move-red"/></svg></button>
                <button aria-label="移位"><svg><use href="#move"/></svg></button>
                <button aria-label="自由粘贴"><svg><use href="#clip"/></svg></button>
            </div>
        </div>

        <section class="drawing">
            <div class="canvas">
                <p class="view-label">[−][俯视][二维线框]</p>
                <svg class="cross" width="98" height="98" viewBox="0 0 98 98"><path d="M48.500 0v97M0 48.500h97M46.500 45.500h4v6h-4z" fill="none" stroke="#fff"/></svg>
                <svg class="arrow" width="168" height="38" viewBox="0 0 168 38"><path d="M0 6L22 0l-5 6 151 31L15 16l3 6z" fill="#f0392f"/></svg>
                <svg class="ucs" width="80" height="76" viewBox="0 0 80 76"><path d="M5.500 18v50h51M1 64.500h8v8H1z" fill="none" stroke="#fff"/><text x="13" y="14" text-anchor="middle">Y</text><text x="66" y="68" text-anchor="middle">X</text></svg>
                <div class="command">
                    <i class="grip-v light"></i>
                    <button aria-label="关闭"><svg width="10" height="10" viewBox="0 0 10 10"><path d="M1 1l8 8M9 1L1 9" stroke="#ccc" stroke-width="2"/></svg></button>
                    <input type="text" aria-label="命令行">
                </div>
            </div>
            <div class="layouts">
                <div class="nav">
                    <button aria-label="首页"><svg viewBox="0 0 12 12"><path d="M3 1v10M10 2v8L5 6z" stroke="#777" fill="#777"/></svg></button>
                    <button aria-label="上一页"><svg viewBox="0 0 12 12"><path d="M9 2v8L4 6z" stroke="#777" fill="#777"/></svg></button>
                    <button aria-label="下一页"><svg viewBox="0 0 12 12"><path d="M4 2v8l5-4z" stroke="#777" fill="#777"/></svg></button>
                    <button aria-label="末页"><svg viewBox="0 0 12 12"><path d="M2 2v8l5-4zM10 1v10" stroke="#777" fill="#777"/></svg></button>
                </div>
                <button class="sheet current">模型</button>
                <button class="sheet">布局1</button>
                <button class="sheet">布局2</button>
            </div>
            <div class="watermark">
                <svg width="72" height="48" viewBox="0 0 72 48"><path d="M0 25L43 0l17 15h8v5H47L41 13 27 24h26l-3 5H38v4h12l-3 5H38v4h12v4H30l2-22H21l-3 22H13l2-21z" fill="#fff"/><path d="M59 20h5v5h-5zM64 25h5v5h-5zM57 30h7v5h-7zM64 35h6v5h-6zM52 38h6v6h-6z" fill="#fff"/></svg>
                <div>
                    <strong>系统之家</strong>
                    <small>XITONGZHIJIA.NET</small>
                </div>
            </div>
        </section>
    </main>
</body>
</html>
```
FILE: styles.css
```css
* {
    margin: 0;
    padding: 0;
    box-sizing: border-box;
}
body {
    display: flex;
    flex-direction: column;
    min-height: 100vh;
    padding-left: 2px;
    background: #fff;
    color: #111;
    font-family: "Noto Sans", "Noto Sans CJK SC", sans-serif;
    font-size: 12px;
    line-height: 18px;
    overflow: hidden;
}
button, select, input {
    border: none;
    background: none;
    color: inherit;
    font: inherit;
}
svg {
    display: block;
    flex: none;
}
.gradients {
    position: absolute;
    width: 0;
    height: 0;
}
.sprite {
    display: none;
}
.t6 { font-size: 6px; }
.t7 { font-size: 7px; }
.t8 { font-size: 8px; font-weight: bold; }
.t10 { font-size: 10px; font-weight: bold; }
.t12 { font-size: 12px; font-weight: bold; }
.t13 { font-size: 13px; }
.white { fill: #fff; font-weight: bold; }

/* cabecera */
.top {
    display: grid;
    grid-template-columns: 41px auto 1fr;
    grid-template-rows: 30px 20px;
}
.app-cell {
    grid-row: 1 / 3;
    padding-top: 7px;
    background: linear-gradient(#fff 7px, #3e3e3e 7px);
}
.app-button {
    width: 41px;
    height: 40px;
    border: 1px solid #222;
    background: linear-gradient(#c2c2c2, #707070);
}
.quick {
    display: flex;
    align-items: center;
    height: 23px;
    margin-top: 7px;
    padding-left: 5px;
    background: linear-gradient(#8b8b8b, #5c5c5c);
}
.quick button {
    width: 24px;
    height: 22px;
    padding: 2px 3px;
}
.quick .mini {
    width: 12px;
    padding: 2px;
}
.space {
    display: flex;
    align-items: center;
    width: 179px;
    height: 22px;
    padding: 0 5px 0 1px;
    background: linear-gradient(#dedede, #b0b0b0);
    border: 1px solid #777;
}
.space select {
    flex: 1;
    appearance: none;
    color: #000;
}
.quick .more {
    width: 16px;
    padding: 3px;
    border: 1px solid #333;
    background: #777;
}
.title {
    padding-left: 26px;
    font-size: 12px;
    font-weight: normal;
    line-height: 28px;
    white-space: nowrap;
}
.title span {
    font-size: 13px;
}
.menu {
    display: flex;
    grid-column: 2 / 4;
    align-items: flex-end;
    padding-left: 4px;
    background: #3e3e3e;
    color: #f2f2f2;
}
.menu button {
    height: 20px;
    padding: 2px 10px 0;
    white-space: nowrap;
}
.menu .active {
    height: 17px;
    padding-top: 0;
    background: linear-gradient(#fff, #ededed);
    color: #222;
    line-height: 17px;
}
.menu .fold {
    margin-left: 14px;
}

/* cinta */
.ribbon {
    display: flex;
    height: 60px;
    border-top: 1px solid #fff;
    border-left: 2px solid #999;
    border-bottom: 1px solid #eee;
    background: linear-gradient(#cbcbcb, #8a8a8a);
}
.panel {
    display: flex;
    flex-direction: column;
    align-items: center;
    width: 61px;
    padding-top: 4px;
    border-right: 2px solid #aaa;
    border-left: 1px solid #fff;
    background: linear-gradient(#fcfcfc, #ececec);
    color: #333;
}
.panel:last-child {
    border-right: none;
}
.panel svg {
    width: 32px;
    height: 32px;
    margin-bottom: 4px;
}
.panel span {
    white-space: nowrap;
}
.big-a {
    font: 600 38px "Open Sans", sans-serif;
    fill: #444;
}

/* zona de trabajo */
.work {
    display: flex;
    flex: 1;
    border-top: 1px solid #555;
    background: #686868;
}
.side {
    width: 76px;
    margin-top: 7px;
    background: #f0f0f0;
    border-left: 1px solid #999;
    border-radius: 4px;
}
.side-title {
    display: flex;
    align-items: center;
    height: 23px;
    padding-left: 2px;
    gap: 5px;
    border-radius: 4px 4px 0 0;
    background: #a4a4a4;
    font-size: 12px;
    font-weight: normal;
}
.grip-v {
    width: 4px;
    height: 13px;
    background:
        repeating-linear-gradient(90deg, transparent 0 1px, #a4a4a4 1px 2px),
        repeating-linear-gradient(#222 0 1px, #a4a4a4 1px 2px);
}
.grip-v.light {
    width: 5px;
    height: 17px;
    background:
        repeating-linear-gradient(90deg, transparent 0 1px, #484848 1px 2px),
        repeating-linear-gradient(#bbb 0 1px, #484848 1px 3px);
}
.side button {
    display: flex;
    align-items: center;
    width: 100%;
    height: 18px;
    padding-left: 2px;
    gap: 5px;
}
.side .side-head {
    height: 26px;
    padding-top: 4px;
    border-bottom: 1px solid #999;
}
.side svg {
    width: 16px;
    height: 16px;
}
.side span {
    width: 48px;
    text-align-last: justify;
    white-space: nowrap;
}
.side ul {
    list-style: none;
    padding: 2px 0;
    border-bottom: 1px solid #bbb;
}
.side ul:last-child {
    border-bottom: none;
}
.toolbars {
    display: flex;
    align-items: flex-start;
    gap: 4px;
    padding: 5px 1px 0 4px;
}
.toolbar {
    display: flex;
    flex-direction: column;
    width: 24px;
    border: 1px solid #444;
    background: #f0f0f0;
}
.grip {
    height: 8px;
    border: solid #555;
    border-width: 2px 4px;
    background:
        repeating-linear-gradient(90deg, transparent 0 1px, #555 1px 2px),
        repeating-linear-gradient(#ddd 0 1px, #555 1px 2px);
}
.toolbar button {
    height: 22px;
    padding: 3px;
}
.toolbar svg {
    width: 16px;
    height: 16px;
}
.toolbar hr {
    height: 1px;
    margin: 2px 2px 3px;
    border: none;
    background: #aaa;
}
.drawing {
    display: flex;
    flex: 1;
    flex-direction: column;
    position: relative;
    margin-top: 5px;
    margin-left: 4px;
    border-top: 1px solid #999;
    border-left: 2px solid #999;
}
.canvas {
    position: relative;
    flex: 1;
    background: #000;
    color: #fff;
}
.view-label {
    padding: 5px 4px;
}
.cross {
    position: absolute;
    left: 275px;
    top: 108px;
}
.arrow {
    position: absolute;
    left: 18px;
    top: 260px;
}
.ucs {
    position: absolute;
    left: 9px;
    bottom: 8px;
}
.ucs text {
    font: 300 18px "Open Sans", sans-serif;
    fill: #fff;
}
.command {
    position: absolute;
    right: 0;
    bottom: 1px;
    display: flex;
    align-items: center;
    width: 203px;
    height: 27px;
    padding-left: 4px;
    border: 1px solid #777;
    border-right: none;
    border-radius: 3px 0 0 3px;
    background: linear-gradient(90deg, #484848 36px, #b0b0b0 72px);
}
.command button {
    padding: 0 6px;
}
.command input {
    flex: 1;
    min-width: 0;
}
.layouts {
    display: flex;
    height: 15px;
    background: #f0f0f0;
}
.nav {
    display: flex;
}
.nav button {
    width: 14px;
    padding: 1px;
    border-right: 1px solid #aaa;
}
.nav svg {
    width: 11px;
    height: 12px;
}
.sheet {
    position: relative;
    height: 15px;
    padding: 0 9px;
    line-height: 15px;
    color: #222;
}
.sheet::after {
    content: "";
    position: absolute;
    top: 0;
    right: 0;
    width: 1px;
    height: 15px;
    background: #666;
    transform: skewX(-25deg);
}
.sheet.current {
    background: #000;
    color: #fff;
    clip-path: polygon(0 0, 100% 0, calc(100% - 6px) 100%, 6px 100%);
}
.watermark {
    position: absolute;
    right: 11px;
    bottom: 6px;
    display: flex;
    color: #fff;
    pointer-events: none;
}
.watermark strong {
    display: block;
    margin-top: 6px;
    font-size: 22px;
    line-height: 28px;
}
.watermark small {
    display: block;
    font: 9px/12px "Liberation Serif", serif;
}
```
